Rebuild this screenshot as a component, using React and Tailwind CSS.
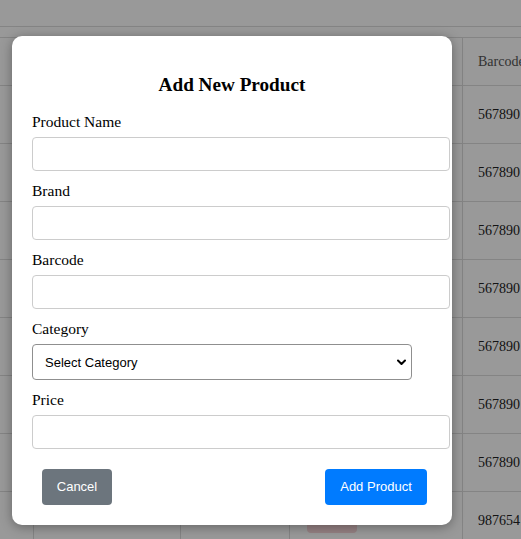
import React from "react";

const rows = ["567890", "567890", "567890", "567890", "567890", "567890", "567890", "987654"];

function Field({ label, first }) {
  return (
    <div className={first ? "" : "mt-[11px]"}>
      <label className="block text-[15.5px] leading-[18px] text-black mb-[6px]">{label}</label>
      <input
        type="text"
        className="block w-[418px] h-[34px] box-border border border-[#cccccc] rounded-[4px] bg-white outline-none"
      />
    </div>
  );
}

export default function App() {
  return (
    <div className="relative w-[521px] h-[539px] overflow-hidden bg-white font-['Liberation_Serif',serif]">
      {/* background page */}
      <div className="h-[27px] border-b border-[#dddddd]" />
      <div className="h-[10px]" />
      <div className="border-t border-[#dddddd]">
        <div className="grid grid-cols-[33px_147px_109px_173px_1fr] h-[48px] border-b border-[#dddddd]">
          <div />
          <div className="border-l border-[#dddddd]" />
          <div className="border-l border-[#dddddd]" />
          <div className="border-l border-[#dddddd]" />
          <div className="border-l border-[#dddddd] flex items-center pl-[15px] text-[14px] text-[#555] whitespace-nowrap overflow-hidden">
            Barcode
          </div>
        </div>
        {rows.map((r, i) => (
          <div
            key={i}
            className="grid grid-cols-[33px_147px_109px_173px_1fr] h-[58px] border-b border-[#dddddd]"
          >
            <div />
            <div className="border-l border-[#dddddd]" />
            <div className="border-l border-[#dddddd]" />
            <div className="border-l border-[#dddddd] flex items-center pl-[17px]">
              {i === rows.length - 1 && <div className="w-[50px] h-[24px] rounded-[4px] bg-[#f8d7da]" />}
            </div>
            <div className="border-l border-[#dddddd] flex items-center pl-[15px] text-[14px] text-[#222] whitespace-nowrap overflow-hidden">
              {r}
            </div>
          </div>
        ))}
      </div>

      {/* overlay */}
      <div className="absolute inset-0 bg-black/40 pl-[12px] pt-[36px]">
        <div className="w-[440px] rounded-[10px] bg-white p-[20px] shadow-[0_2px_12px_rgba(0,0,0,0.35)]">
          <h2 className="mt-[17px] mb-[17px] text-center text-[19.2px] leading-[23px] font-bold text-black">
            Add New Product
          </h2>
          <Field label="Product Name" first />
          <Field label="Brand" />
          <Field label="Barcode" />
          <div className="mt-[11px]">
            <label className="block text-[15.5px] leading-[18px] text-black mb-[6px]">Category</label>
            <div className="relative w-[380px] h-[36px] box-border border border-[#8f8f8f] rounded-[4px] bg-white flex items-center pl-[12px] pt-[1px] font-['Liberation_Sans',Arial,sans-serif] text-[13px] text-black">
              Select Category
              <svg
                className="absolute right-[5px] top-[14px]"
                width="9"
                height="7"
                viewBox="0 0 9 7"
                fill="none"
              >
                <path d="M1 1.5 L4.5 5 L8 1.5" stroke="#000" strokeWidth="2" strokeLinecap="round" strokeLinejoin="round" />
              </svg>
            </div>
          </div>
          <Field label="Price" />
          <div className="mt-[20px] flex justify-between pl-[10px] pr-[5px] font-['Liberation_Sans',Arial,sans-serif] text-[13px]">
            <button className="h-[36px] w-[70px] rounded-[4px] bg-[#6c757d] text-white">Cancel</button>
            <button className="h-[36px] w-[102px] rounded-[4px] bg-[#007bff] text-white">Add Product</button>
          </div>
        </div>
      </div>
    </div>
  );
}
